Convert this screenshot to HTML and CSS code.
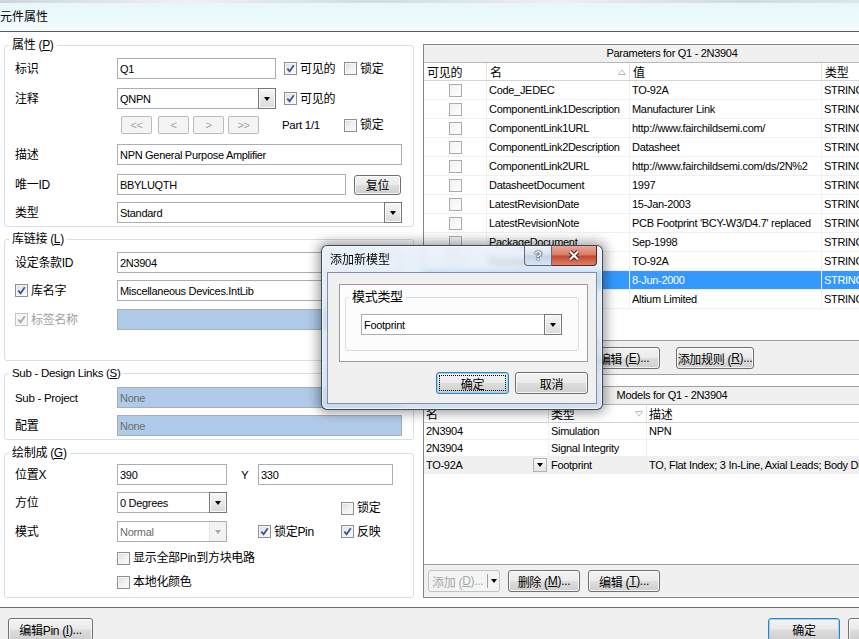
FILE: index.html
```html
<!DOCTYPE html>
<html lang="zh-CN">
<head>
<meta charset="utf-8">
<title>元件属性</title>
<link rel="stylesheet" href="styles.css">
</head>
<body>
<div class="win">
  <header class="glass">
    <div class="toolstrip"></div>
    <div class="wtitle">元件属性</div>
  </header>

  <div class="main">
    <div class="left">
      <fieldset class="grp g1">
        <legend>属性 (<u>P</u>)</legend>
        <div class="row">
          <span class="lbl">标识</span>
          <div class="edit w159">Q1</div>
          <label class="chk w60 ml8"><span class="cb"><svg viewBox="0 0 11 11"><path d="M2.3 5.6l2.3 2.6 4.2-6"/></svg></span>可见的</label>
          <label class="chk"><span class="cb"></span>锁定</label>
        </div>
        <div class="row mt9">
          <span class="lbl">注释</span>
          <div class="combo w159"><span class="val">QNPN</span><span class="dd"><i class="tri"></i></span></div>
          <label class="chk w60 ml8"><span class="cb"><svg viewBox="0 0 11 11"><path d="M2.3 5.6l2.3 2.6 4.2-6"/></svg></span>可见的</label>
        </div>
        <div class="row r18 mt7">
          <span class="lbl"></span>
          <div class="navs"><span class="nb">&lt;&lt;</span><span class="nb">&lt;</span><span class="nb">&gt;</span><span class="nb">&gt;&gt;</span></div>
          <span class="part">Part 1/1</span>
          <label class="chk"><span class="cb"></span>锁定</label>
        </div>
        <div class="row mt10">
          <span class="lbl">描述</span>
          <div class="edit w285">NPN General Purpose Amplifier</div>
        </div>
        <div class="row mt9">
          <span class="lbl">唯一ID</span>
          <div class="edit w229">BBYLUQTH</div>
          <span class="btn reset">复位</span>
        </div>
        <div class="row mt7">
          <span class="lbl">类型</span>
          <div class="combo w285"><span class="val">Standard</span><span class="dd"><i class="tri"></i></span></div>
        </div>
      </fieldset>

      <fieldset class="grp g2">
        <legend>库链接 (<u>L</u>)</legend>
        <div class="row">
          <span class="lbl">设定条款ID</span>
          <div class="edit w285">2N3904</div>
        </div>
        <div class="row mt7">
          <label class="chk lbl"><span class="cb"><svg viewBox="0 0 11 11"><path d="M2.3 5.6l2.3 2.6 4.2-6"/></svg></span>库名字</label>
          <div class="edit w285">Miscellaneous Devices.IntLib</div>
        </div>
        <div class="row mt8">
          <label class="chk lbl off"><span class="cb"><svg viewBox="0 0 11 11"><path d="M2.3 5.6l2.3 2.6 4.2-6"/></svg></span>标签名称</label>
          <div class="edit w285 dis"></div>
        </div>
      </fieldset>

      <fieldset class="grp g3">
        <legend class="lat">Sub - Design Links (<u>S</u>)</legend>
        <div class="row">
          <span class="lbl lat">Sub - Project</span>
          <div class="edit w285 dis">None</div>
        </div>
        <div class="row mt7">
          <span class="lbl">配置</span>
          <div class="edit w285 dis">None</div>
        </div>
      </fieldset>

      <fieldset class="grp g4">
        <legend>绘制成 (<u>G</u>)</legend>
        <div class="row">
          <span class="lbl">位置X</span>
          <div class="edit w110">390</div>
          <span class="ylbl">Y</span>
          <div class="edit w135">330</div>
        </div>
        <div class="row mt7">
          <span class="lbl">方位</span>
          <div class="combo w110"><span class="val">0 Degrees</span><span class="dd"><i class="tri"></i></span></div>
          <label class="chk lockdown"><span class="cb"></span>锁定</label>
        </div>
        <div class="row mt8">
          <span class="lbl">模式</span>
          <div class="combo w110 dis"><span class="val">Normal</span><span class="dd off"><i class="tri"></i></span></div>
          <label class="chk w83 ml31"><span class="cb"><svg viewBox="0 0 11 11"><path d="M2.3 5.6l2.3 2.6 4.2-6"/></svg></span>锁定Pin</label>
          <label class="chk"><span class="cb"><svg viewBox="0 0 11 11"><path d="M2.3 5.6l2.3 2.6 4.2-6"/></svg></span>反映</label>
        </div>
        <div class="row r16 mt8 indent">
          <label class="chk"><span class="cb"></span>显示全部Pin到方块电路</label>
        </div>
        <div class="row r16 mt8 indent">
          <label class="chk"><span class="cb"></span>本地化颜色</label>
        </div>
      </fieldset>
    </div>

    <div class="right">
      <div class="hdr">Parameters for Q1 - 2N3904</div>
      <div class="ptable">
        <div class="prow phead"><span>可见的</span><span class="sortc">名<svg class="sort" viewBox="0 0 8 6"><path d="M0.5 5.5L4 0.8 7.5 5.5z"/></svg></span><span>值</span><span>类型</span></div>
        <div class="prow"><span class="cc"><i class="tcb"></i></span><span>Code_JEDEC</span><span>TO-92A</span><span>STRING</span></div>
        <div class="prow"><span class="cc"><i class="tcb"></i></span><span>ComponentLink1Description</span><span>Manufacturer Link</span><span>STRING</span></div>
        <div class="prow"><span class="cc"><i class="tcb"></i></span><span>ComponentLink1URL</span><span>http://www.fairchildsemi.com/</span><span>STRING</span></div>
        <div class="prow"><span class="cc"><i class="tcb"></i></span><span>ComponentLink2Description</span><span>Datasheet</span><span>STRING</span></div>
        <div class="prow"><span class="cc"><i class="tcb"></i></span><span>ComponentLink2URL</span><span>http://www.fairchildsemi.com/ds/2N%2</span><span>STRING</span></div>
        <div class="prow"><span class="cc"><i class="tcb"></i></span><span>DatasheetDocument</span><span>1997</span><span>STRING</span></div>
        <div class="prow"><span class="cc"><i class="tcb"></i></span><span>LatestRevisionDate</span><span>15-Jan-2003</span><span>STRING</span></div>
        <div class="prow"><span class="cc"><i class="tcb"></i></span><span>LatestRevisionNote</span><span>PCB Footprint 'BCY-W3/D4.7' replaced</span><span>STRING</span></div>
        <div class="prow"><span class="cc"><i class="tcb"></i></span><span>PackageDocument</span><span>Sep-1998</span><span>STRING</span></div>
        <div class="prow"><span class="cc"><i class="tcb"></i></span><span>PackageReference</span><span>TO-92A</span><span>STRING</span></div>
        <div class="prow sel"><span class="cc"><i class="tcb"></i></span><span>PackageVersion</span><span>8-Jun-2000</span><span>STRING</span></div>
        <div class="prow"><span class="cc"><i class="tcb"></i></span><span>Publisher</span><span>Altium Limited</span><span>STRING</span></div>
      </div>
      <div class="bar pbar">
        <span class="btn b72">添加 (<u>A</u>)...</span>
        <span class="btn b72">删除 (<u>V</u>)...</span>
        <span class="btn b72">编辑 (<u>E</u>)...</span>
        <span class="btn b78 ml8">添加规则 (<u>R</u>)...</span>
      </div>
      <div class="gapw"></div>
      <div class="hdr mhdr">Models for Q1 - 2N3904</div>
      <div class="mtable">
        <div class="mrow mhead"><span>名</span><span class="sortc">类型<svg class="sort" viewBox="0 0 8 6"><path d="M0.5 0.5L4 5.2 7.5 0.5z"/></svg></span><span>描述</span></div>
        <div class="mrow"><span>2N3904</span><span>Simulation</span><span>NPN</span></div>
        <div class="mrow"><span>2N3904</span><span>Signal Integrity</span><span></span></div>
        <div class="mrow cur"><span class="ddcell">TO-92A<i class="mdd"><i class="tri"></i></i></span><span>Footprint</span><span>TO, Flat Index; 3 In-Line, Axial Leads; Body Dia 4.19mm; Lead Dia 0.46mm</span></div>
      </div>
      <div class="bar mbar">
        <span class="split"><span class="stxt">添加 (<u>D</u>)...</span><span class="sarr"><i class="tri"></i></span></span>
        <span class="btn b72">删除 (<u>M</u>)...</span>
        <span class="btn b72">编辑 (<u>T</u>)...</span>
      </div>
    </div>
  </div>

  <footer class="foot">
    <span class="btn b85">编辑Pin (<u>I</u>)...</span>
    <div class="okcancel">
      <span class="btn b72 def">确定</span>
      <span class="btn b72">取消</span>
    </div>
  </footer>

  <div class="dlg">
    <div class="dtitle">
      <span class="dt">添加新模型</span>
      <span class="hb">?</span>
      <span class="xb"><svg viewBox="0 0 14 11"><path class="xo" d="M3 1.5l8 8M11 1.5l-8 8"/><path class="xi" d="M3 1.5l8 8M11 1.5l-8 8"/></svg></span>
    </div>
    <div class="dclient">
      <div class="dbox">
        <fieldset class="dgrp">
          <legend>模式类型</legend>
          <div class="combo w201"><span class="val">Footprint</span><span class="dd"><i class="tri"></i></span></div>
        </fieldset>
      </div>
      <div class="dbtns">
        <span class="btn b73 def focus">确定</span>
        <span class="btn b73">取消</span>
      </div>
    </div>
  </div>
</div>
</body>
</html>
```

FILE: styles.css
```css
* { box-sizing: border-box; }
html, body { margin: 0; padding: 0; width: 859px; height: 639px; overflow: hidden; }
body {
  font-family: "Liberation Sans", "Noto Sans CJK SC", sans-serif;
  font-size: 11px;
  letter-spacing: -0.3px;
  color: #000;
  background: #f0f0f0;
}
u { text-decoration: underline; }

.win { position: relative; width: 930px; height: 639px; }

/* window title glass */
.glass {
  height: 32px;
  border-bottom: 1px solid #5a5a5a;
  background: linear-gradient(180deg, #e6f6fa 0%, #edf9fc 55%, #f3fbfe 100%);
}
.toolstrip {
  height: 3px;
  background: linear-gradient(90deg, #cdd5dc 0%, #eef1f3 20%, #d3dae0 40%, #eceff2 60%, #d2d9df 80%, #e6eaee 100%);
}
.wtitle { font-size: 12px; line-height: 16px; padding-top: 6px; letter-spacing: 0; }

/* main client */
.main {
  display: flex;
  height: 576px;
  background: #fff;
  border-bottom: 1px solid #6d6d6d;
  padding-right: 10px;
}
.left { width: 423px; flex: none; padding-top: 5px; }

.grp {
  margin: 0 9px 0 4px;
  padding: 0;
  border: 1px solid #d5dfe5;
  border-radius: 3px;
  min-width: 0;
}
.grp legend { font-size: 12px; line-height: 16px; padding: 0 3px; margin-left: 4px; }
.grp legend.lat { font-size: 11.5px; }
.g1 { padding: 5px 0 3px; }
.g2 { margin-top: 4px; padding: 5px 0 30px; }
.g3 { margin-top: 4px; padding: 6px 0 3px; }
.g4 { margin-top: 5px; padding: 3px 0 7px; }

.row { display: flex; align-items: center; height: 21px; padding-left: 10px; }
.row.r18 { height: 18px; }
.row.r16 { height: 16px; }
.row.indent { padding-left: 112px; }
.mt7 { margin-top: 7px; }
.mt8 { margin-top: 8px; }
.mt9 { margin-top: 9px; }
.mt10 { margin-top: 10px; }
.ml8 { margin-left: 8px; }
.ml31 { margin-left: 31px; }
.w60 { width: 60px; }
.w83 { width: 83px; }
.lbl { width: 102px; flex: none; font-size: 12px; line-height: 16px; white-space: nowrap; }
.lbl.lat { font-size: 11.5px; }

.edit {
  height: 21px;
  border: 1px solid #a9aeb6;
  background: #fff;
  padding: 0 2px;
  display: flex;
  align-items: center;
  white-space: nowrap;
  overflow: hidden;
  flex: none;
}
.w110 { width: 110px; }
.w135 { width: 135px; }
.w159 { width: 159px; }
.w201 { width: 201px; }
.w229 { width: 229px; }
.w285 { width: 285px; }
.dis { background: #b0cbea; color: #6d6d6d; }

.combo {
  height: 21px;
  display: flex;
  border: 1px solid #a9aeb6;
  background: #fff;
  flex: none;
}
.combo .val { flex: 1; padding-left: 2px; display: flex; align-items: center; white-space: nowrap; overflow: hidden; }
.dd {
  width: 18px;
  margin: -1px -1px -1px 0;
  border: 1px solid #777;
  background: linear-gradient(180deg, #f7f7f7 0%, #e8e8e8 50%, #dadada 100%);
  box-shadow: inset 0 0 0 1px #fbfbfb;
  display: flex;
  align-items: center;
  justify-content: center;
}
.dd.off {
  width: 17px;
  margin: 0;
  border: none;
  border-left: 1px solid #e2e2e2;
  background: #f3f3f3;
  box-shadow: none;
}
.tri {
  display: block;
  width: 0; height: 0;
  border-left: 3.5px solid transparent;
  border-right: 3.5px solid transparent;
  border-top: 4px solid #000;
}
.dd.off .tri { border-top-color: #a6a6a6; }

/* checkboxes */
.chk { display: inline-flex; align-items: center; font-size: 12px; line-height: 14px; white-space: nowrap; flex: none; }
.cb {
  width: 13px; height: 13px;
  flex: none;
  margin-right: 3px;
  border: 1px solid #8e8f8f;
  background: linear-gradient(135deg, #d6d8dc 0%, #eceef0 45%, #fdfdfd 100%);
  box-shadow: inset 0 0 0 1px #f6f6f6;
  display: flex;
  align-items: center;
  justify-content: center;
}
.cb svg { width: 11px; height: 11px; display: block; }
.cb svg path { fill: none; stroke: #3b5698; stroke-width: 1.8; }
.chk.off { color: #a0a0a0; }
.chk.off .cb { border-color: #c4c4c4; background: #f4f4f4; }
.chk.off .cb svg path { stroke: #a8a8a8; }
.lockdown { margin-left: 114px; align-self: flex-end; margin-bottom: -2px; }

/* nav buttons */
.navs { display: flex; gap: 4px; margin-left: 4px; }
.nb {
  width: 31px; height: 18px;
  border: 1px solid #b8bcc0;
  border-radius: 2px;
  background: #f4f4f4;
  color: #a3a3a3;
  display: flex; align-items: center; justify-content: center;
  font-size: 11px;
}
.nb:first-child { margin-right: 2px; }
.part { margin-left: 23px; width: 62px; font-size: 11.5px; }
.ylbl { width: 31px; padding-left: 14px; font-size: 11.5px; flex: none; }

/* buttons */
.btn {
  height: 22px;
  border: 1px solid #707070;
  border-radius: 3px;
  background: linear-gradient(180deg, #f2f2f2 0%, #ebebeb 48%, #dddddd 52%, #cfcfcf 100%);
  box-shadow: inset 0 0 0 1px rgba(255,255,255,0.75);
  display: inline-flex;
  align-items: center;
  justify-content: center;
  font-size: 12px;
  white-space: nowrap;
  flex: none;
}
.btn.reset { width: 47px; height: 20px; margin-left: 8px; }
.b72 { width: 72px; }
.b73 { width: 73px; }
.b78 { width: 78px; }
.b85 { width: 85px; height: 23px; }
.btn.def { border-color: #3c7fb1; box-shadow: inset 0 0 0 1px #8fd6f8; }
.btn.focus { outline: 1px dotted #000; outline-offset: -4px; }

/* right panel */
.right {
  width: 497px;
  flex: none;
  margin-top: 12px;
  height: 554px;
  border: 1px solid #828790;
  border-right: none;
  display: flex;
  flex-direction: column;
}
.hdr {
  height: 18px;
  flex: none;
  background: #f0f0f0;
  border-bottom: 1px solid #b9b9b9;
  text-align: center;
  line-height: 17px;
  font-size: 11px;
}
.mhdr { height: 19px; border-top: 1px solid #a0a0a0; }

.ptable { height: 278px; flex: none; background: #fff; border-bottom: 1px solid #a0a0a0; overflow: hidden; }
.prow {
  display: grid;
  grid-template-columns: 63px 143px 192px 1fr;
  height: 19px;
  border-bottom: 1px solid #f0f0f0;
}
.prow > span, .mrow > span {
  border-right: 1px solid #f0f0f0;
  padding-left: 2px;
  white-space: nowrap;
  overflow: hidden;
  display: flex;
  align-items: center;
}
.phead { height: 18px; border-bottom-color: #d5d5d5; font-size: 12px; }
.phead > span { border-right-color: #e3e3e3; padding-left: 3px; }
.prow > span.cc { justify-content: center; padding-left: 0; }
.tcb {
  display: block;
  width: 13px; height: 13px;
  border: 1px solid #ababab;
  background: linear-gradient(135deg, #f1f1f1, #fff);
}
.prow.sel { background: #3399ff; color: #fff; }
.sortc { justify-content: flex-start; }
.sort { width: 8px; height: 6px; margin-left: auto; margin-right: 3px; }
.sort path { fill: none; stroke: #bdbdbd; stroke-width: 1; }

.bar { background: #f0f0f0; display: flex; gap: 8px; padding-left: 4px; flex: none; }
.pbar { height: 34px; padding-top: 6px; border-bottom: 1px solid #a0a0a0; }
.pbar .ml8 { margin-left: 8px; }
.gapw { height: 11px; flex: none; background: #fff; }
.mbar { height: 32px; padding-top: 5px; }

.mtable { height: 160px; flex: none; background: #fff; border-bottom: 1px solid #a0a0a0; overflow: hidden; }
.mrow {
  display: grid;
  grid-template-columns: 125px 98px 1fr;
  height: 17px;
  border-bottom: 1px solid #f0f0f0;
}
.mhead { height: 18px; border-bottom-color: #d5d5d5; font-size: 12px; }
.mhead > span { border-right-color: #e3e3e3; }
.mrow.cur { background: #f0f0f0; }
.ddcell { justify-content: space-between; }
.mdd {
  width: 14px; height: 14px;
  margin-right: 1px;
  border: 1px solid #b3b3b3;
  background: linear-gradient(180deg, #fafafa, #e3e3e3);
  display: flex; align-items: center; justify-content: center;
}

.split {
  width: 72px; height: 22px;
  border: 1px solid #c0c4c8;
  border-radius: 3px;
  background: #f4f4f4;
  display: flex;
  font-size: 12px;
}
.stxt { width: 59px; color: #a8a8a8; display: flex; align-items: center; padding-left: 3px; border-right: 1px solid #a0a0a0; margin: 3px 0; white-space: nowrap; }
.sarr { flex: 1; display: flex; align-items: center; justify-content: center; }

/* footer */
.foot { height: 31px; display: flex; padding: 10px 10px 0 8px; }
.okcancel { margin-left: auto; display: flex; gap: 8px; }
.foot .btn { height: 23px; }

/* dialog */
.dlg {
  position: absolute;
  left: 321px;
  top: 245px;
  width: 282px;
  height: 165px;
  border: 1px solid rgba(35, 45, 60, 0.85);
  border-radius: 6px;
  background: linear-gradient(180deg, rgba(228, 238, 248, 0.78) 0%, rgba(205, 221, 240, 0.82) 100%);
  backdrop-filter: blur(3px);
  box-shadow: 0 0 12px 3px rgba(0, 0, 0, 0.38), inset 0 0 0 1px rgba(255, 255, 255, 0.55);
  padding: 0 5px 5px;
  display: flex;
  flex-direction: column;
}
.dtitle { height: 26px; display: flex; align-items: flex-start; flex: none; }
.dt { font-size: 12px; line-height: 16px; padding: 6px 0 0 3px; letter-spacing: 0; }
.hb {
  margin-left: auto;
  width: 28px; height: 20px;
  border: 1px solid #5d6b7c;
  border-top: none;
  border-radius: 0 0 0 4px;
  background: linear-gradient(180deg, #eef3f8 0%, #d7e2ee 48%, #c3d3e5 52%, #d9e5f1 100%);
  color: #fff;
  font-weight: bold;
  font-size: 13px;
  display: flex; align-items: center; justify-content: center;
  text-shadow: 0 0 1px #1c2a3a, 0 0 1px #1c2a3a, 0 0 2px #1c2a3a;
}
.xb {
  width: 45px; height: 20px;
  border: 1px solid #5a2a22;
  border-top: none;
  border-left: none;
  border-radius: 0 0 4px 0;
  background: linear-gradient(180deg, #e9a899 0%, #d97a64 48%, #c6452b 52%, #d9826b 100%);
  display: flex; align-items: center; justify-content: center;
}
.xb svg { width: 14px; height: 11px; display: block; }
.xb .xo { stroke: #4a1a12; stroke-width: 4; fill: none; }
.xb .xi { stroke: #fff; stroke-width: 2.2; fill: none; }

.dclient {
  height: 132px;
  flex: none;
  background: #f0f0f0;
  border: 1px solid #7f90a6;
  padding: 11px 0 0 11px;
}
.dbox {
  width: 249px; height: 78px;
  border: 1px solid #9a9a9a;
  background: #fcfcfc;
  padding: 4px 0 0 5px;
}
.dgrp {
  width: 234px;
  margin: 0;
  padding: 9px 0 15px 15px;
  border: 1px solid #d5dfe5;
  border-radius: 3px;
  min-width: 0;
}
.dgrp legend { font-size: 13px; line-height: 16px; padding: 0 3px; margin-left: -12px; }
.dbtns { width: 249px; margin-top: 10px; display: flex; justify-content: flex-end; gap: 6px; }
```
